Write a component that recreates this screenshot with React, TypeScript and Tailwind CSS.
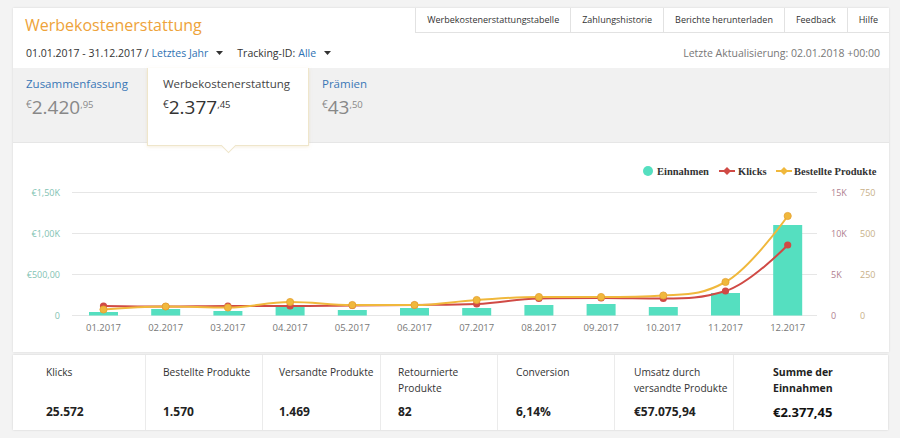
import React from "react"

const months = ["01.2017", "02.2017", "03.2017", "04.2017", "05.2017", "06.2017", "07.2017", "08.2017", "09.2017", "10.2017", "11.2017", "12.2017"]
const barTops = [312, 309, 311, 306, 310, 308, 308, 305, 304, 307, 293, 225]
const clicks = [306, 306.5, 306, 306, 305.5, 305, 304, 298.5, 298, 298.5, 291, 245]
const ordered = [309.5, 306.5, 307.5, 302, 305, 305, 300, 297, 297, 295.5, 282, 216]
const X0 = 103.5
const DX = 62.2
const BASE = 315.5

const xAt = (i: number) => X0 + DX * i

// highcharts-like spline
function spline(ys: number[]) {
  const pts = ys.map((y, i) => ({ x: xAt(i), y }))
  const s = 1.5
  const d = s + 1
  const ctl = pts.map((p, i) => {
    const prev = pts[i - 1]
    const next = pts[i + 1]
    if (!prev || !next) return { lx: p.x, ly: p.y, rx: p.x, ry: p.y }
    const lx = (s * p.x + prev.x) / d
    let ly = (s * p.y + prev.y) / d
    const rx = (s * p.x + next.x) / d
    let ry = (s * p.y + next.y) / d
    const corr = ((ry - ly) * (rx - p.x)) / (rx - lx) + p.y - ry
    ly += corr
    ry += corr
    if (ly > prev.y && ly > p.y) { ly = Math.max(prev.y, p.y); ry = 2 * p.y - ly }
    else if (ly < prev.y && ly < p.y) { ly = Math.min(prev.y, p.y); ry = 2 * p.y - ly }
    if (ry > next.y && ry > p.y) { ry = Math.max(next.y, p.y); ly = 2 * p.y - ry }
    else if (ry < next.y && ry < p.y) { ry = Math.min(next.y, p.y); ly = 2 * p.y - ry }
    return { lx, ly, rx, ry }
  })
  let dStr = `M ${pts[0].x} ${pts[0].y}`
  for (let i = 1; i < pts.length; i++) {
    const a = ctl[i - 1]
    const b = ctl[i]
    dStr += ` C ${a.rx} ${a.ry} ${b.lx} ${b.ly} ${pts[i].x} ${pts[i].y}`
  }
  return dStr
}

function Caret() {
  return (
    <svg width="7" height="4" viewBox="0 0 7 4" className="ml-[8px] inline-block">
      <path d="M0 0 L7 0 L3.5 4 Z" fill="#333" />
    </svg>
  )
}

function Amount({ main, cents, dark }: { main: string; cents: string; dark?: boolean }) {
  return (
    <div className={`mt-[3px] leading-[24px] ${dark ? "text-[#333]" : "text-[#888]"}`}>
      <span className="relative -top-[6px] text-[10px]">€</span>
      <span className="text-[19px]">{main}</span>
      <span className="relative -top-[6px] text-[9.5px]">,{cents}</span>
    </div>
  )
}

function Chart() {
  const grid = [192.5, 233.5, 274.5, 315.5]
  const left = ["€1,50K", "€1,00K", "€500,00", "0"]
  const r1 = ["15K", "10K", "5K", "0"]
  const r2 = ["750", "500", "250", "0"]
  return (
    <svg width="876" height="209" viewBox="13 143 876 209" className="block" style={{ fontFamily: "'Open Sans', sans-serif" }}>
      {/* legend */}
      <g style={{ fontFamily: "'Liberation Serif', serif" }} fontSize="10.5" fontWeight="bold" fill="#333">
        <circle cx="648" cy="171" r="5" fill="#55dfc0" />
        <text x="657" y="174.5">Einnahmen</text>
        <line x1="719" y1="171" x2="735" y2="171" stroke="#d04a45" strokeWidth="2" />
        <path d="M727 167 L731 171 L727 175 L723 171 Z" fill="#d04a45" />
        <text x="738" y="174.5">Klicks</text>
        <line x1="776" y1="171" x2="792" y2="171" stroke="#f0b83c" strokeWidth="2" />
        <path d="M784 167 L788 171 L784 175 L780 171 Z" fill="#f0b83c" />
        <text x="794" y="174.5">Bestellte Produkte</text>
      </g>
      {grid.map((y, i) => (
        <g key={y}>
          <line x1="72" y1={y} x2="817" y2={y} stroke="#e6e6e6" strokeWidth="1" />
          <text x="60" y={y + 3.5} fontSize="9" textAnchor="end" fill="#7fc2b2">{left[i]}</text>
          <text x="831" y={y + 3.5} fontSize="9" fill="#b0808f">{r1[i]}</text>
          <text x="860" y={y + 3.5} fontSize="9" fill="#c8b088">{r2[i]}</text>
        </g>
      ))}
      {barTops.map((t, i) => (
        <rect key={i} x={xAt(i) - 14.5} y={t} width="29" height={BASE - t} fill="#55dfc0" />
      ))}
      {months.map((m, i) => (
        <text key={m} x={xAt(i)} y="330.5" fontSize="9.5" textAnchor="middle" fill="#777">{m}</text>
      ))}
      <path d={spline(clicks)} fill="none" stroke="#d04a45" strokeWidth="2" />
      <path d={spline(ordered)} fill="none" stroke="#f0b83c" strokeWidth="2" />
      {clicks.map((y, i) => (
        <circle key={"c" + i} cx={xAt(i)} cy={y} r="3.6" fill="#d04a45" />
      ))}
      {ordered.map((y, i) => (
        <circle key={"o" + i} cx={xAt(i)} cy={y} r="3.6" fill="#f0b83c" stroke="#e5a030" strokeWidth="0.8" />
      ))}
    </svg>
  )
}

const stats = [
  { label: "Klicks", value: "25.572", pl: "pl-[33px]", w: "w-[133px]" },
  { label: "Bestellte Produkte", value: "1.570", pl: "pl-[17px]", w: "w-[117px]" },
  { label: "Versandte Produkte", value: "1.469", pl: "pl-[16px]", w: "w-[118px]" },
  { label: "Retournierte Produkte", value: "82", pl: "pl-[17px]", w: "w-[117px]" },
  { label: "Conversion", value: "6,14%", pl: "pl-[18px]", w: "w-[117px]" },
  { label: "Umsatz durch versandte Produkte", value: "€57.075,94", pl: "pl-[19px]", w: "w-[119px]" },
]

const navItems = ["Werbekostenerstattungstabelle", "Zahlungshistorie", "Berichte herunterladen", "Feedback", "Hilfe"]

export default function App() {
  return (
    <div className="min-h-screen bg-[#f3f3f3] pt-[8px] pl-[13px] pr-[11px] font-['Open_Sans',sans-serif] text-[#333]">
      <div className="bg-white shadow-[0_0_2px_rgba(0,0,0,0.12)]">
        {/* header */}
        <div className="flex h-[29px] items-start justify-between">
          <h1 className="pl-[12px] pt-[5px] text-[16px] leading-[24px] font-normal text-[#eea33a]">Werbekostenerstattung</h1>
          <div className="flex h-[25px] border-b border-l border-[#e2e2e2]">
            {navItems.map((n, i) => (
              <div
                key={n}
                className={`flex items-center px-[11px] text-[9px] text-[#333] ${i < navItems.length - 1 ? "border-r border-[#e2e2e2]" : ""}`}
              >
                {n}
              </div>
            ))}
          </div>
        </div>
        <div className="mt-[8px] flex h-[16px] items-center justify-between pl-[13px] pr-[9px] pb-0 text-[10.5px] leading-[16px]">
          <div className="flex items-center">
            <span>01.01.2017 - 31.12.2017 / </span>
            <span className="ml-[3px] text-[#2f72b3]">Letztes Jahr</span>
            <Caret />
            <span className="ml-[14px]">Tracking-ID:</span>
            <span className="ml-[3px] text-[#2f72b3]">Alle</span>
            <Caret />
          </div>
          <div className="text-[#777]">Letzte Aktualisierung: 02.01.2018 +00:00</div>
        </div>
        <div className="h-[7px]" />

        {/* tabs */}
        <div className="flex h-[75px] border-b border-[#e6e6e6] bg-[#f1f1f1]">
          <div className="w-[134px] pl-[13px] pt-[8px]">
            <div className="text-[11.5px] leading-[16px] text-[#3a77b6]">Zusammenfassung</div>
            <Amount main="2.420" cents="95" />
          </div>
          <div className="relative z-10 -mb-[4px] w-[162px] border-x border-b border-[#efe6cb] bg-white pl-[15px] pt-[8px] shadow-[0_1px_3px_rgba(230,210,160,0.35)]">
            <div className="text-[11.5px] leading-[16px] text-[#444]">Werbekostenerstattung</div>
            <Amount main="2.377" cents="45" dark />
            <div className="absolute -bottom-[6px] left-[75px] h-[11px] w-[11px] rotate-45 border-r border-b border-[#efe6cb] bg-white" />
          </div>
          <div className="pl-[13px] pt-[8px]">
            <div className="text-[11.5px] leading-[16px] text-[#3a77b6]">Prämien</div>
            <Amount main="43" cents="50" />
          </div>
        </div>

        {/* chart */}
        <Chart />
      </div>

      {/* stats */}
      <div className="mt-[3px] flex h-[75px] w-[875px] bg-white shadow-[0_0_2px_rgba(0,0,0,0.15)]">
        {stats.map((s) => (
          <div key={s.label} className={`${s.w} ${s.pl} shrink-0 border-r border-[#ebebeb] pt-[9px]`}>
            <div className="h-[40px] text-[10.2px] leading-[16px] text-[#333]">{s.label}</div>
            <div className="text-[12px] leading-[16px] font-bold text-[#222]">{s.value}</div>
          </div>
        ))}
        <div className="flex-1 pl-[39px] pt-[9px]">
          <div className="h-[40px] w-[80px] text-[10.5px] leading-[16px] font-bold text-[#222]">Summe der Einnahmen</div>
          <div className="text-[13px] leading-[16px] font-bold text-[#111]">€2.377,45</div>
        </div>
      </div>
    </div>
  )
}
